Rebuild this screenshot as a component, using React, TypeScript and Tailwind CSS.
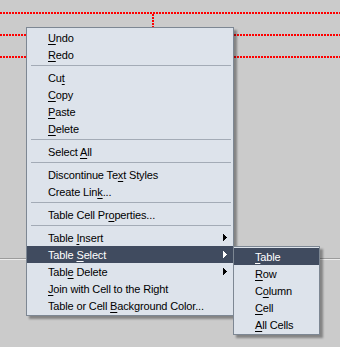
import React from "react";

type Item = { label: string; arrow?: boolean; active?: boolean } | "sep";

const mainItems: Item[] = [
  { label: "&Undo" },
  { label: "&Redo" },
  "sep",
  { label: "Cu&t" },
  { label: "&Copy" },
  { label: "&Paste" },
  { label: "&Delete" },
  "sep",
  { label: "Select &All" },
  "sep",
  { label: "Discontinue Te&xt Styles" },
  { label: "Create Lin&k..." },
  "sep",
  { label: "Table Cell Pr&operties..." },
  "sep",
  { label: "Table &Insert", arrow: true },
  { label: "Table &Select", arrow: true, active: true },
  { label: "Tabl&e Delete", arrow: true },
  { label: "&Join with Cell to the Right" },
  { label: "Table or Cell &Background Color..." },
];

const subItems: Item[] = [
  { label: "&Table", active: true },
  { label: "&Row" },
  { label: "C&olumn" },
  { label: "&Cell" },
  { label: "&All Cells" },
];

function Label({ text }: { text: string }) {
  const i = text.indexOf("&");
  return (
    <span className="whitespace-nowrap pt-[2px]">
      {text.slice(0, i)}
      <span className="underline decoration-1 underline-offset-[2px]">{text[i + 1]}</span>
      {text.slice(i + 2)}
    </span>
  );
}

function Arrow({ active }: { active?: boolean }) {
  const c = active ? "#ffffff" : "#000000";
  return (
    <svg width="4" height="7" viewBox="0 0 4 7" shapeRendering="crispEdges">
      <rect x="0" y="0" width="1" height="1" fill={c} />
      <rect x="0" y="1" width="2" height="1" fill={c} />
      <rect x="0" y="2" width="3" height="1" fill={c} />
      <rect x="0" y="3" width="4" height="1" fill={c} />
      <rect x="0" y="4" width="3" height="1" fill={c} />
      <rect x="0" y="5" width="2" height="1" fill={c} />
      <rect x="0" y="6" width="1" height="1" fill={c} />
    </svg>
  );
}

function MenuRows({ items }: { items: Item[] }) {
  return (
    <>
      {items.map((it, idx) =>
        it === "sep" ? (
          <div key={idx} className="h-[6px] pt-[2px] pl-[4px] pr-[2px]">
            <div className="h-px bg-[#a3abb6]" />
          </div>
        ) : (
          <div
            key={idx}
            className={
              it.active
                ? "flex h-[17px] items-center justify-between pl-[21px] pr-[6px] bg-[#404b5f] text-white"
                : "flex h-[17px] items-center justify-between pl-[21px] pr-[6px] text-black"
            }
          >
            <Label text={it.label} />
            {it.arrow ? <Arrow active={it.active} /> : null}
          </div>
        )
      )}
    </>
  );
}

export default function App() {
  return (
    <div
      className="relative w-[340px] h-[347px] overflow-hidden bg-[#cbcbcb] text-[11px] leading-[15px] tracking-[-0.15px]"
      style={{ fontFamily: '"Liberation Sans", Arial, sans-serif' }}
    >
      <div className="h-[12px]" />
      <div className="h-[2px] bg-[image:repeating-linear-gradient(90deg,#f00_0px,#f00_2px,transparent_2px,transparent_3px)]" />
      <div className="ml-[152px] w-[2px] h-[20px] bg-[image:repeating-linear-gradient(180deg,#f00_0px,#f00_2px,transparent_2px,transparent_3px)]" />
      <div className="h-[2px] bg-[image:repeating-linear-gradient(90deg,#f00_0px,#f00_2px,transparent_2px,transparent_3px)]" />
      <div className="h-[20px]" />
      <div className="h-[2px] bg-[image:repeating-linear-gradient(90deg,#f00_0px,#f00_2px,transparent_2px,transparent_3px)]" />
      <div className="h-[200px]" />
      <div className="h-px bg-[#9c9c9c]" />
      <div className="h-px bg-[#ececec]" />

      <div className="absolute left-[26px] top-[27px] w-[208px] border border-[#7d8793] bg-[#dde3eb] py-px shadow-[3px_3px_2px_rgba(0,0,0,0.35)]">
        <MenuRows items={mainItems} />
      </div>

      <div className="absolute left-[233px] top-[246px] w-[87px] border border-[#7d8793] bg-[#dde3eb] py-px shadow-[3px_3px_2px_rgba(0,0,0,0.35)]">
        <MenuRows items={subItems} />
      </div>
    </div>
  );
}
